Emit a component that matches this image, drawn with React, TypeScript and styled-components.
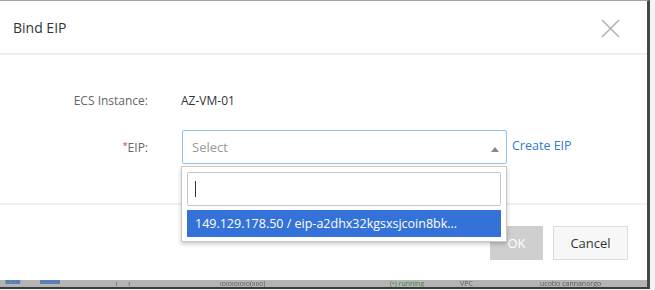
import React from "react";
import styled, { createGlobalStyle } from "styled-components";

const Global = createGlobalStyle`
  html, body { margin: 0; padding: 0; background: #f4f4f4; }
  body { font-family: "Open Sans", "Noto Sans", Arial, sans-serif; }
  * { box-sizing: border-box; }
`;

const Page = styled.div`
  width: 655px;
  height: 290px;
  overflow: hidden;
`;

const Window = styled.div`
  width: 650px;
  height: 289px;
  display: flex;
  flex-direction: column;
  border-top: 1px solid #a3a3a3;
  border-right: 3px solid #474747;
  border-bottom: 2px solid #3c3c3c;
`;

const Dialog = styled.div`
  flex: 1;
  background: #fff;
  display: flex;
  flex-direction: column;
`;

const Header = styled.div`
  height: 54px;
  padding: 0 27px 0 13px;
  display: flex;
  align-items: center;
  justify-content: space-between;
  border-bottom: 2px solid #efefef;
`;

const Title = styled.div`
  font-size: 14px;
  color: #333;
  padding-top: 1px;
`;

const Close = styled.button`
  border: none;
  background: none;
  padding: 0;
  width: 19px;
  height: 19px;
  margin-top: 3px;
  display: flex;
`;

const Body = styled.div`
  padding: 36px 0 39px;
  border-bottom: 2px solid #f0f0f0;
`;

const Form = styled.div`
  display: grid;
  grid-template-columns: 148px 326px auto;
  column-gap: 33px;
  row-gap: 19px;
  align-items: center;
`;

const Label = styled.div`
  text-align: right;
  font-size: 12px;
  color: #666;
  line-height: 20px;
`;

const Star = styled.span`
  color: #e83030;
  font-size: 9px;
  vertical-align: 3px;
`;

const Value = styled.div`
  font-size: 12px;
  color: #333;
  line-height: 20px;
  grid-column: span 2;
`;

const SelectWrap = styled.div`
  position: relative;
  margin-left: 1px;
`;

const SelectBox = styled.div`
  height: 34px;
  border: 1px solid #8ec3ee;
  border-radius: 2px;
  display: flex;
  align-items: center;
  justify-content: space-between;
  padding: 0 7px 0 9px;
  font-size: 13px;
  color: #999;
`;

const Caret = styled.span`
  width: 0;
  height: 0;
  border-left: 4px solid transparent;
  border-right: 4px solid transparent;
  border-bottom: 5px solid #888;
  margin-top: 4px;
`;

const Link = styled.a`
  font-size: 12.5px;
  color: #2f7bd5;
  text-decoration: none;
  margin-left: -28px;
  margin-top: -4px;
`;

const Dropdown = styled.div`
  position: absolute;
  top: 36px;
  left: -1px;
  width: 326px;
  background: #fff;
  border: 1px solid #c8c8c8;
  box-shadow: 0 2px 4px rgba(0, 0, 0, 0.22);
  padding: 5px 5px 4px;
  display: flex;
  flex-direction: column;
  gap: 4px;
  z-index: 2;
`;

const Search = styled.div`
  height: 34px;
  border: 1px solid #c6c6c6;
  border-radius: 2px;
  display: flex;
  align-items: center;
  padding-left: 7px;
`;

const Cursor = styled.span`
  width: 1px;
  height: 16px;
  background: #333;
`;

const Option = styled.div<{ $active?: boolean }>`
  height: 27px;
  background: ${(p) => (p.$active ? "#3472d9" : "#fff")};
  color: ${(p) => (p.$active ? "#fff" : "#333")};
  font-size: 12.5px;
  display: flex;
  align-items: center;
  padding-left: 8px;
  white-space: nowrap;
`;

const Footer = styled.div`
  flex: 1;
  display: flex;
  justify-content: flex-end;
  align-items: flex-start;
  gap: 10px;
  padding: 21px 19px 0 0;
`;

const Button = styled.button<{ $primary?: boolean }>`
  height: 34px;
  width: ${(p) => (p.$primary ? "53px" : "75px")};
  font-family: inherit;
  font-size: 13px;
  border-radius: 0;
  border: 1px solid ${(p) => (p.$primary ? "#cfcfcf" : "#dcdcdc")};
  background: ${(p) => (p.$primary ? "#cfcfcf" : "#f7f7f7")};
  color: ${(p) => (p.$primary ? "#fff" : "#333")};
  padding: 0;
`;

const Backdrop = styled.div`
  height: 7px;
  background: #b4b4b4;
  display: flex;
  align-items: center;
  overflow: hidden;
  font-size: 7px;
  line-height: 7px;
  white-space: pre;
  filter: blur(0.4px);
`;

const BgText = styled.span<{ $color?: string; $w: number }>`
  width: ${(p) => p.$w}px;
  flex: none;
  color: ${(p) => p.$color || "#5e5e5e"};
`;

const bgTexts = [
  { w: 40, t: "   ▀▀▀", color: "#5a7fb0" },
  { w: 70, t: "▀▀▀▀", color: "#5a7fb0" },
  { w: 110, t: "   ı      ı" },
  { w: 170, t: "ıoıoıoıoıo(ııııo)" },
  { w: 70, t: "(•) running", color: "#3d8a3d" },
  { w: 80, t: "VPC" },
  { w: 110, t: "ucotio cannanorgo" },
];

export default function App() {
  return (
    <Page>
      <Global />
      <Window>
        <Dialog>
          <Header>
            <Title>Bind EIP</Title>
            <Close aria-label="close">
              <svg width="19" height="19" viewBox="0 0 19 19">
                <path d="M1 1L18 18M18 1L1 18" stroke="#b2b2b2" strokeWidth="1.6" fill="none" />
              </svg>
            </Close>
          </Header>
          <Body>
            <Form>
              <Label>ECS Instance:</Label>
              <Value>AZ-VM-01</Value>
              <Label>
                <Star>*</Star>EIP:
              </Label>
              <SelectWrap>
                <SelectBox>
                  <span>Select</span>
                  <Caret />
                </SelectBox>
                <Dropdown>
                  <Search>
                    <Cursor />
                  </Search>
                  <Option $active>149.129.178.50 / eip-a2dhx32kgsxsjcoin8bk...</Option>
                </Dropdown>
              </SelectWrap>
              <Link href="#">Create EIP</Link>
            </Form>
          </Body>
          <Footer>
            <Button $primary>OK</Button>
            <Button>Cancel</Button>
          </Footer>
        </Dialog>
        <Backdrop>
          {bgTexts.map((b, i) => (
            <BgText key={i} $w={b.w} $color={b.color}>
              {b.t}
            </BgText>
          ))}
        </Backdrop>
      </Window>
    </Page>
  );
}
